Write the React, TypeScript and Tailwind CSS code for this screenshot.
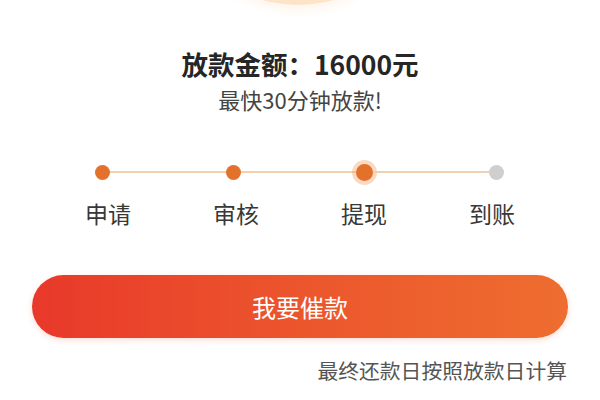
import React from "react";

export default function App() {
  const font = { fontFamily: '"Noto Sans CJK SC", "Noto Sans", sans-serif' };
  return (
    <div
      className="w-[600px] h-[400px] bg-white overflow-hidden flex flex-col"
      style={font}
    >
      <div className="flex justify-center">
        <div className="w-[250px] h-[250px] mt-[-245px] rounded-full bg-[#fde3c7] shadow-[0_0_10px_6px_#fff6ee] ml-[-4px]" />
      </div>

      <div className="mt-[41px] text-center text-[26.5px] leading-[36px] font-bold text-[#262626]">
        放款金额：16000元
      </div>
      <div className="mt-[2px] text-center text-[22px] leading-[30px] text-[#444444]">
        最快30分钟放款!
      </div>

      <div className="mt-[47px] ml-[95px] w-[409px] h-[22px] flex items-center">
        <div className="w-[15px] h-[15px] rounded-full bg-[#e3712b]" />
        <div className="flex-1 h-[2px] bg-[#f3cfb2]" />
        <div className="w-[15px] h-[15px] rounded-full bg-[#e3712b]" />
        <div className="flex-1 h-[2px] bg-[#f3cfb2]" />
        <div className="w-[17px] h-[17px] rounded-full bg-[#e3712b] shadow-[0_0_0_4px_rgba(242,150,80,0.35)]" />
        <div className="flex-1 h-[2px] bg-[#f3cfb2]" />
        <div className="w-[15px] h-[15px] rounded-full bg-[#cfcfcf]" />
      </div>

      <div className="mt-[15px] ml-[44px] flex text-[23px] leading-[30px] text-[#383838]">
        <div className="w-[128px] text-center">申请</div>
        <div className="w-[128px] text-center">审核</div>
        <div className="w-[128px] text-center">提现</div>
        <div className="w-[128px] text-center">到账</div>
      </div>

      <div className="mt-[47px] mx-[32px] h-[63px] rounded-full bg-gradient-to-r from-[#e8382a] to-[#ee6d2f] shadow-[0_2px_6px_rgba(232,80,40,0.2)] flex items-center justify-center text-white text-[24px]">
        我要催款
      </div>

      <div className="mt-[18px] pr-[33px] text-right text-[20.8px] leading-[28px] text-[#555555]">
        最终还款日按照放款日计算
      </div>
    </div>
  );
}
